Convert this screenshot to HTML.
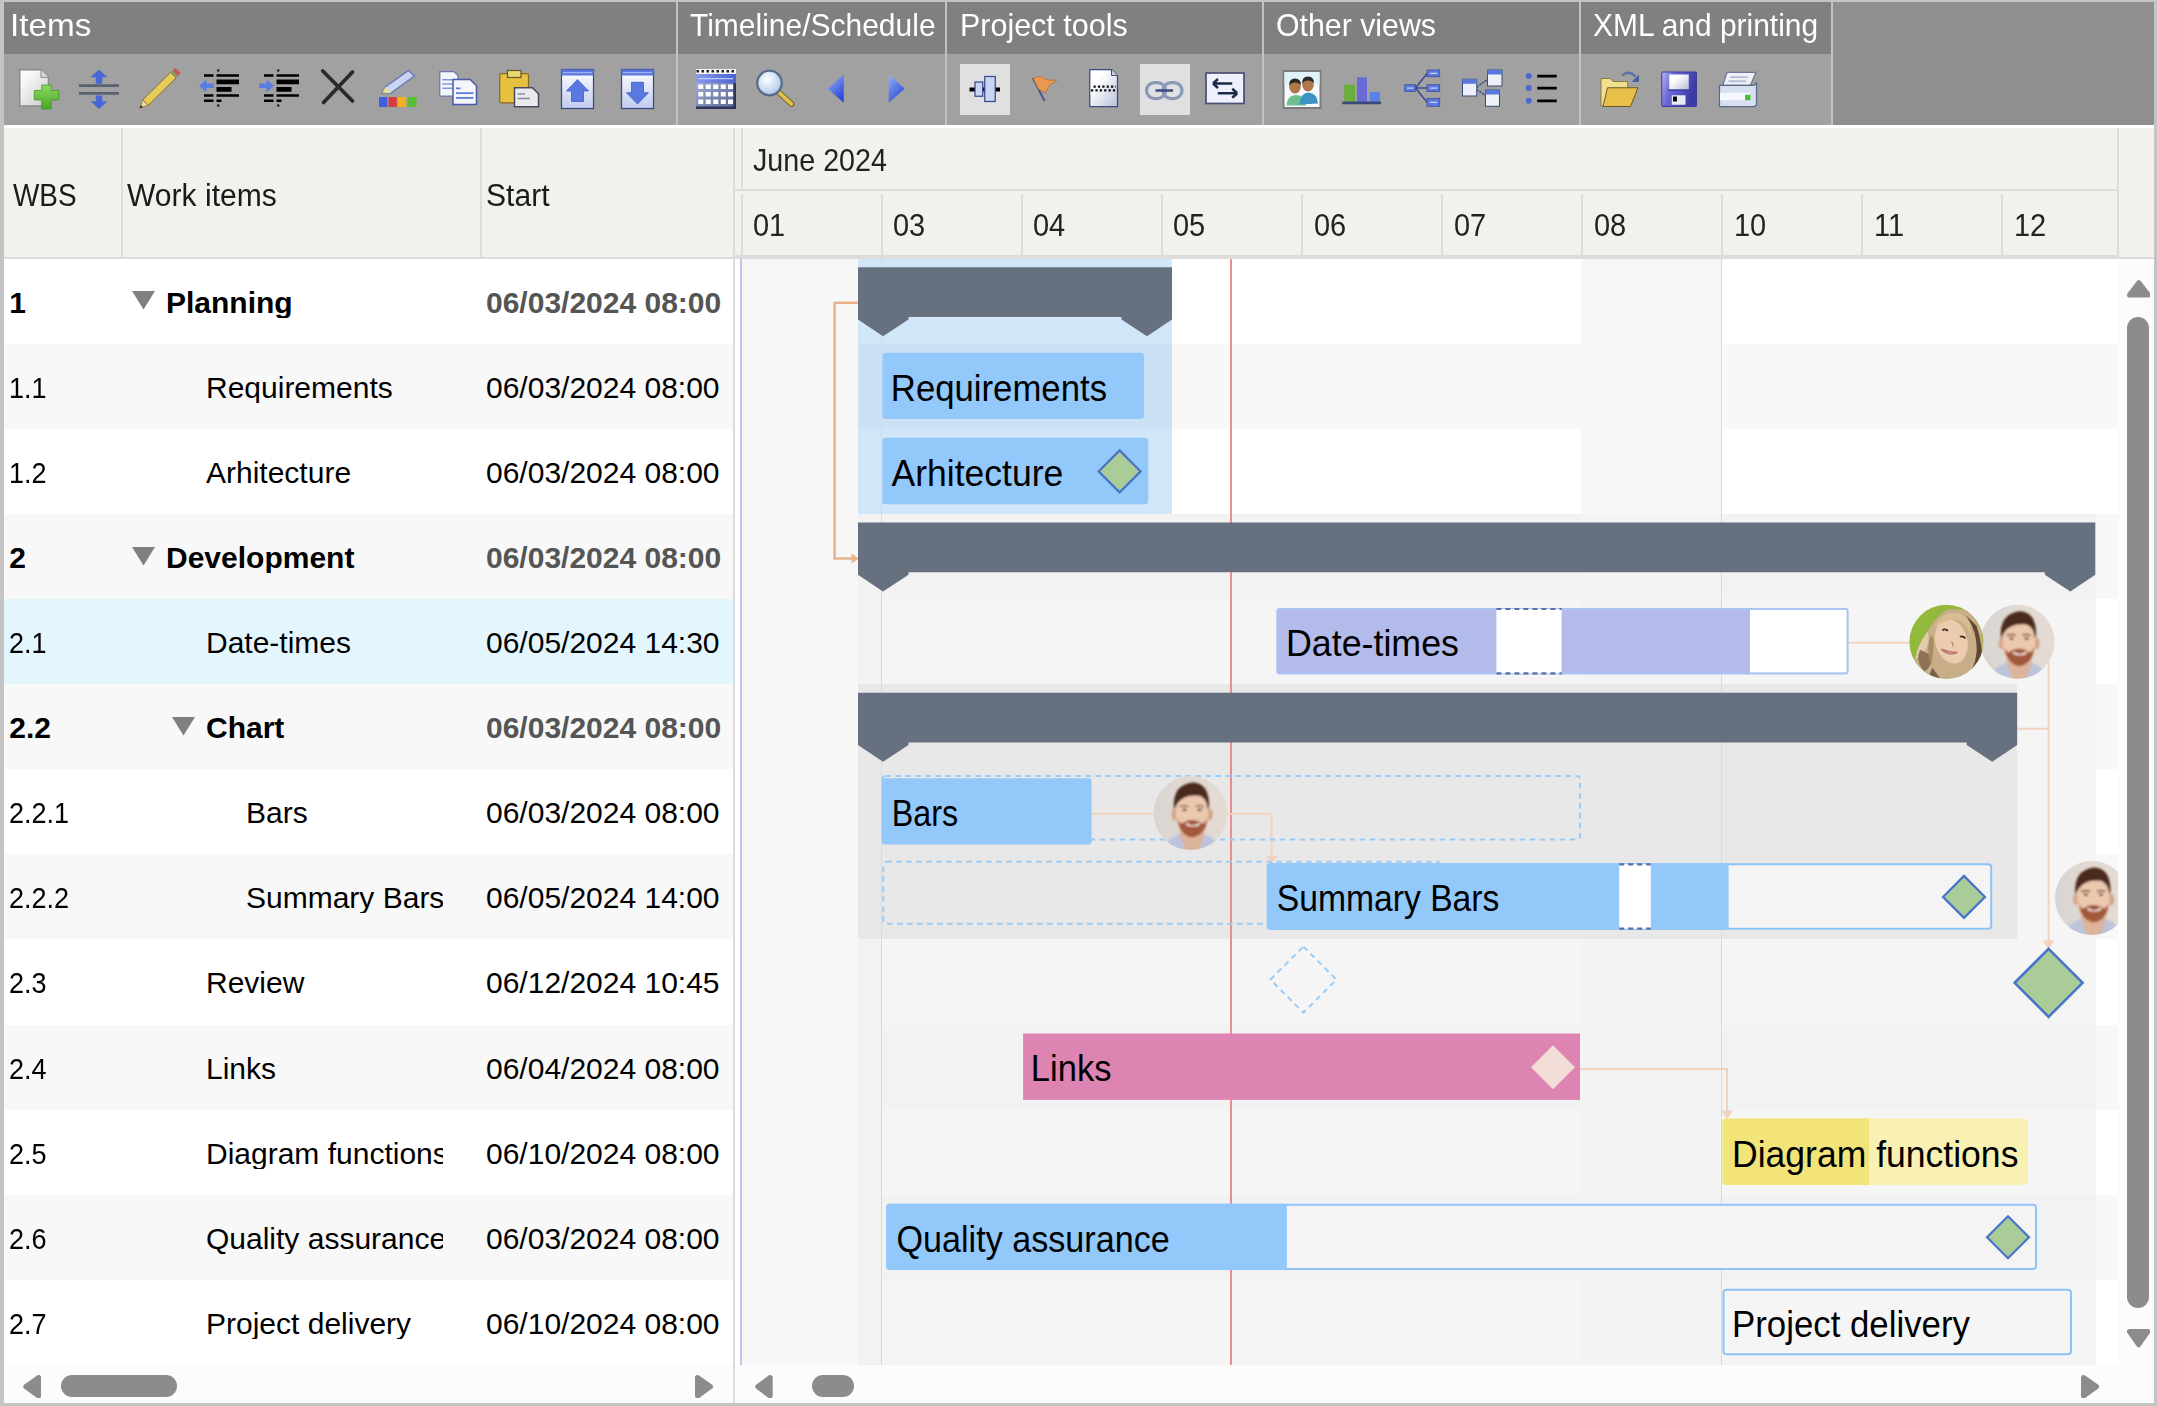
<!DOCTYPE html>
<html><head><meta charset="utf-8"><title>Gantt</title>
<style>
html,body{margin:0;padding:0;}
body{width:2157px;height:1406px;position:relative;overflow:hidden;font-family:"Liberation Sans", sans-serif;}
body>div,body>svg{position:absolute;}
.t{white-space:nowrap;}
</style></head><body>
<div style="left:0px;top:0px;width:2157px;height:1406px;background:#c4c4c4;"></div>
<div style="left:4px;top:2px;width:2150px;height:1401px;background:#ffffff;"></div>
<div style="left:4px;top:2px;width:672px;height:52px;background:#808080;"></div>
<div style="left:4px;top:54px;width:672px;height:70.5px;background:#a1a1a1;"></div>
<div style="left:678px;top:2px;width:267px;height:52px;background:#808080;"></div>
<div style="left:678px;top:54px;width:267px;height:70.5px;background:#a1a1a1;"></div>
<div style="left:947px;top:2px;width:315px;height:52px;background:#808080;"></div>
<div style="left:947px;top:54px;width:315px;height:70.5px;background:#a1a1a1;"></div>
<div style="left:1264px;top:2px;width:315px;height:52px;background:#808080;"></div>
<div style="left:1264px;top:54px;width:315px;height:70.5px;background:#a1a1a1;"></div>
<div style="left:1581px;top:2px;width:250px;height:52px;background:#808080;"></div>
<div style="left:1581px;top:54px;width:250px;height:70.5px;background:#a1a1a1;"></div>
<div style="left:676px;top:2px;width:2px;height:122.5px;background:#c2c2c2;"></div>
<div style="left:945px;top:2px;width:2px;height:122.5px;background:#c2c2c2;"></div>
<div style="left:1262px;top:2px;width:2px;height:122.5px;background:#c2c2c2;"></div>
<div style="left:1579px;top:2px;width:2px;height:122.5px;background:#c2c2c2;"></div>
<div style="left:1831px;top:2px;width:2px;height:122.5px;background:#c2c2c2;"></div>
<div style="left:1833px;top:2px;width:321px;height:122.5px;background:#8f8f8f;"></div>
<div class="t" style="left:10.0px;top:8.61px;font-size:32px;line-height:32px;color:#ffffff;font-weight:normal;transform:scaleX(1.04);transform-origin:0 0;">Items</div>
<div class="t" style="left:689.5px;top:8.61px;font-size:32px;line-height:32px;color:#ffffff;font-weight:normal;transform:scaleX(0.937);transform-origin:0 0;">Timeline/Schedule</div>
<div class="t" style="left:959.5px;top:8.61px;font-size:32px;line-height:32px;color:#ffffff;font-weight:normal;transform:scaleX(0.952);transform-origin:0 0;">Project tools</div>
<div class="t" style="left:1275.5px;top:8.61px;font-size:32px;line-height:32px;color:#ffffff;font-weight:normal;transform:scaleX(0.947);transform-origin:0 0;">Other views</div>
<div class="t" style="left:1592.5px;top:8.61px;font-size:32px;line-height:32px;color:#ffffff;font-weight:normal;transform:scaleX(0.935);transform-origin:0 0;">XML and printing</div>
<div style="left:4px;top:124.5px;width:2150px;height:3.0px;background:#ffffff;"></div>
<div style="left:960px;top:64px;width:50px;height:50.7px;background:#e0e0e0;"></div>
<div style="left:1140px;top:64px;width:50px;height:50.7px;background:#e0e0e0;"></div>
<svg style="left:0;top:0" width="0" height="0"><defs><filter id="icb" x="-20%" y="-20%" width="140%" height="140%"><feGaussianBlur stdDeviation="0.22"/></filter></defs></svg>
<svg style="left:19px;top:68.5px;overflow:visible" width="40" height="40" viewBox="0 0 16 16"><g filter="url(#icb)">
<defs><linearGradient id="ng" x1="0" y1="0" x2="1" y2="1"><stop offset="0.2" stop-color="#fafafa"/><stop offset="1" stop-color="#c8c8c8"/></linearGradient>
<linearGradient id="pg" x1="0" y1="0" x2="0" y2="1"><stop offset="0" stop-color="#8ad860"/><stop offset="1" stop-color="#48a828"/></linearGradient></defs>
<path d="M0.3,0.3 H8.8 L11.8,3.3 V14.8 H0.3 Z" fill="url(#ng)" stroke="#8a8a8a" stroke-width="0.6"/>
<path d="M8.8,0.3 V3.3 H11.8" fill="#dcdcdc" stroke="#9a9a9a" stroke-width="0.5"/>
<path d="M9.1,6.4 H12.9 V8.6 H15.9 V12.4 H12.9 V16 H9.1 V12.4 H6.1 V8.6 H9.1 Z" fill="url(#pg)" stroke="#3f9a1a" stroke-width="0.3"/>
</g></svg>
<svg style="left:79px;top:68.5px;overflow:visible" width="40" height="40" viewBox="0 0 16 16"><g filter="url(#icb)">
<rect x="0" y="6.1" width="16" height="1.1" fill="#5a6272"/>
<rect x="0" y="9.2" width="16" height="1.1" fill="#5a6272"/>
<path d="M8,0.2 L11.4,3.3 H9.3 V5.9 H6.7 V3.3 H4.6 Z" fill="#4a68d8"/>
<path d="M8,16 L11.4,12.9 H9.3 V10.6 H6.7 V12.9 H4.6 Z" fill="#4a68d8"/>
</g></svg>
<svg style="left:139px;top:68.5px;overflow:visible" width="40" height="40" viewBox="0 0 16 16"><g filter="url(#icb)">
<polygon points="1.49,12.35 12.66,1.32 14.84,3.53 3.67,14.56" fill="#e6cc58" stroke="#8a7030" stroke-width="0.4"/>
<polygon points="0.30,15.70 1.49,12.35 3.67,14.56" fill="#e8d4a8" stroke="#8a7030" stroke-width="0.3"/>
<polygon points="0.30,15.70 1.51,15.21 0.80,14.50" fill="#111"/>
<polygon points="12.66,1.32 13.37,0.62 15.55,2.83 14.84,3.53" fill="#7aa070"/>
<polygon points="13.37,0.62 14.51,-0.50 16.69,1.70 15.55,2.83" fill="#c85858"/>
</g></svg>
<svg style="left:199px;top:68.5px;overflow:visible" width="40" height="40" viewBox="0 0 16 16"><g filter="url(#icb)">
<rect x="7.3" y="0.2" width="0.8" height="0.8" fill="#000"/>
<rect x="2" y="2.1" width="3.8" height="1" fill="#000"/><rect x="7" y="2.1" width="9" height="1" fill="#000"/>
<rect x="7" y="4.2" width="9" height="1.9" fill="#000"/>
<rect x="7" y="7.2" width="6" height="1.9" fill="#000"/>
<rect x="2" y="10.1" width="3.8" height="1" fill="#000"/><rect x="7" y="10.1" width="9" height="1" fill="#000"/>
<rect x="2" y="12.2" width="3.8" height="1" fill="#000"/><rect x="7" y="12.2" width="2" height="1" fill="#000"/>
<rect x="7.3" y="14.2" width="0.8" height="0.8" fill="#000"/>
<path d="M0,6.7 L3,4.1 V5.8 H5.9 V7.6 H3 V9.3 Z" fill="#5a7ee0"/></g></svg>
<svg style="left:259px;top:68.5px;overflow:visible" width="40" height="40" viewBox="0 0 16 16"><g filter="url(#icb)">
<rect x="7.3" y="0.2" width="0.8" height="0.8" fill="#000"/>
<rect x="2" y="2.1" width="3.8" height="1" fill="#000"/><rect x="7" y="2.1" width="9" height="1" fill="#000"/>
<rect x="7" y="4.2" width="9" height="1.9" fill="#000"/>
<rect x="7" y="7.2" width="6" height="1.9" fill="#000"/>
<rect x="2" y="10.1" width="3.8" height="1" fill="#000"/><rect x="7" y="10.1" width="9" height="1" fill="#000"/>
<rect x="2" y="12.2" width="3.8" height="1" fill="#000"/><rect x="7" y="12.2" width="2" height="1" fill="#000"/>
<rect x="7.3" y="14.2" width="0.8" height="0.8" fill="#000"/>
<path d="M6,6.7 L3,4.1 V5.8 H0.1 V7.6 H3 V9.3 Z" fill="#5a7ee0"/></g></svg>
<svg style="left:319px;top:68.5px;overflow:visible" width="40" height="40" viewBox="0 0 16 16"><g filter="url(#icb)">
<path d="M1.5,0.8 L13.4,12.8 M13.4,1.2 L1.8,13.4" stroke="#2a2a2e" stroke-width="1.5" stroke-linecap="round"/>
</g></svg>
<svg style="left:379px;top:68.5px;overflow:visible" width="40" height="40" viewBox="0 0 16 16"><g filter="url(#icb)">
<path d="M1.4,9.5 L2.6,7.1 L11.8,0.6 L14.2,2.8 L4.8,9.6 Z" fill="#c8d4f0" stroke="#6a7ab0" stroke-width="0.6"/>
<path d="M1.4,9.5 L2.6,7.1 L4.8,9.6 Z" fill="#e8e090"/>
<rect x="0" y="11.2" width="3.3" height="4" fill="#3a5ee0"/>
<rect x="3.8" y="11.2" width="3.3" height="4" fill="#d83a3a"/>
<rect x="7.6" y="11.2" width="3.3" height="4" fill="#f0b020"/>
<rect x="11.4" y="11.2" width="3.6" height="4" fill="#58c030"/>
</g></svg>
<svg style="left:439px;top:68.5px;overflow:visible" width="40" height="40" viewBox="0 0 16 16"><g filter="url(#icb)">
<path d="M0.3,1 H6 L7.6,2.6 V10.8 H0.3 Z" fill="#f4f6fb" stroke="#6a7aa8" stroke-width="0.5"/>
<rect x="1.3" y="4" width="4.5" height="0.6" fill="#7a9ae0"/><rect x="1.3" y="5.7" width="4.5" height="0.6" fill="#7a9ae0"/><rect x="1.3" y="7.4" width="4.5" height="0.6" fill="#7a9ae0"/>
<path d="M5.6,4.2 H12.5 L15,6.7 V14.2 H5.6 Z" fill="#f4f6fb" stroke="#4a5aa8" stroke-width="0.6"/>
<rect x="6.8" y="7.4" width="1.8" height="0.7" fill="#5a7ae0"/><rect x="6.8" y="9.3" width="7" height="0.7" fill="#5a7ae0"/><rect x="6.8" y="11.2" width="7" height="0.7" fill="#5a7ae0"/>
</g></svg>
<svg style="left:499px;top:68.5px;overflow:visible" width="40" height="40" viewBox="0 0 16 16"><g filter="url(#icb)">
<rect x="0.3" y="1.8" width="11.5" height="11.7" rx="0.6" fill="#e8c040" stroke="#8a6a20" stroke-width="0.5"/>
<rect x="3.4" y="0.6" width="5.4" height="2.8" fill="#e8d870" stroke="#6a5a30" stroke-width="0.5"/>
<path d="M6.2,7.5 H13.4 L15.8,9.9 V15.1 H6.2 Z" fill="#e8eaf0" stroke="#4a4a5a" stroke-width="0.6"/>
<rect x="7.4" y="9.7" width="3" height="0.6" fill="#8a8a9a"/><rect x="7.4" y="11.5" width="5" height="0.6" fill="#8a8a9a"/>
</g></svg>
<svg style="left:559px;top:68.5px;overflow:visible" width="40" height="40" viewBox="0 0 16 16"><g filter="url(#icb)">
<defs><linearGradient id="wgu" x1="0" y1="0" x2="0" y2="1"><stop offset="0" stop-color="#ffffff"/><stop offset="1" stop-color="#c0ccf0"/></linearGradient></defs>
<rect x="1" y="0.2" width="12.8" height="15.6" fill="url(#wgu)" stroke="#3a4a80" stroke-width="0.5"/>
<rect x="1" y="0.2" width="12.8" height="2.4" fill="#5a78e0"/>
<rect x="1.6" y="1.2" width="11.6" height="0.5" fill="#9ab0f0"/>
<path d="M7.4,4.2 L11.8,8.8 H9.8 V13 H5 V8.8 H3 Z" fill="#5a78e0" stroke="#3a58c0" stroke-width="0.3"/></g></svg>
<svg style="left:619px;top:68.5px;overflow:visible" width="40" height="40" viewBox="0 0 16 16"><g filter="url(#icb)">
<defs><linearGradient id="wgd" x1="0" y1="0" x2="0" y2="1"><stop offset="0" stop-color="#ffffff"/><stop offset="1" stop-color="#c0ccf0"/></linearGradient></defs>
<rect x="1" y="0.2" width="12.8" height="15.6" fill="url(#wgd)" stroke="#3a4a80" stroke-width="0.5"/>
<rect x="1" y="0.2" width="12.8" height="2.4" fill="#5a78e0"/>
<rect x="1.6" y="1.2" width="11.6" height="0.5" fill="#9ab0f0"/>
<path d="M7.4,14 L11.8,9.5 H9.8 V5.3 H5 V9.5 H3 Z" fill="#5a78e0" stroke="#3a58c0" stroke-width="0.3"/></g></svg>
<svg style="left:696px;top:68.5px;overflow:visible" width="40" height="40" viewBox="0 0 16 16"><g filter="url(#icb)">
<defs><linearGradient id="calg" x1="0" y1="0" x2="1" y2="1"><stop offset="0" stop-color="#a8b4dc"/><stop offset="1" stop-color="#56648e"/></linearGradient>
<linearGradient id="calh" x1="0" y1="0" x2="1" y2="0"><stop offset="0" stop-color="#8a9ce8"/><stop offset="1" stop-color="#4a62d0"/></linearGradient></defs>
<rect x="0" y="0" width="16" height="2" fill="#f4f4f4"/>
<path d="M0.2,0.9 H16" stroke="#202020" stroke-width="1" stroke-dasharray="1,1"/>
<rect x="0" y="2" width="16" height="14" fill="url(#calg)"/>
<rect x="0" y="2" width="16" height="3.6" fill="url(#calh)"/>
<rect x="0.8" y="3.6" width="14" height="0.5" fill="#b8c8f8"/>
<rect x="0" y="15" width="16" height="1" fill="#2a3458"/>
<rect x="15" y="5.6" width="1" height="10.4" fill="#2a3458"/>
<rect x="0.9" y="6.2" width="2" height="1.8" fill="#ffffff"/><rect x="3.9" y="6.2" width="2" height="1.8" fill="#ffffff"/><rect x="6.9" y="6.2" width="2" height="1.8" fill="#ffffff"/><rect x="9.9" y="6.2" width="2" height="1.8" fill="#ffffff"/><rect x="12.8" y="6.2" width="2" height="1.8" fill="#ffffff"/><rect x="0.9" y="9.2" width="2" height="1.8" fill="#ffffff"/><rect x="3.9" y="9.2" width="2" height="1.8" fill="#ffffff"/><rect x="6.9" y="9.2" width="2" height="1.8" fill="#ffffff"/><rect x="9.9" y="9.2" width="2" height="1.8" fill="#ffffff"/><rect x="12.8" y="9.2" width="2" height="1.8" fill="#ffffff"/><rect x="0.9" y="12.2" width="2" height="1.8" fill="#ffffff"/><rect x="3.9" y="12.2" width="2" height="1.8" fill="#ffffff"/><rect x="6.9" y="12.2" width="2" height="1.8" fill="#ffffff"/><rect x="9.9" y="12.2" width="2" height="1.8" fill="#ffffff"/><rect x="12.8" y="12.2" width="2" height="1.8" fill="#ffffff"/></g></svg>
<svg style="left:756px;top:68.5px;overflow:visible" width="40" height="40" viewBox="0 0 16 16"><g filter="url(#icb)">
<defs><radialGradient id="zg" cx="0.4" cy="0.35" r="0.7"><stop offset="0" stop-color="#ffffff"/><stop offset="1" stop-color="#a8c4e4"/></radialGradient></defs>
<path d="M9.4,9.6 L14.2,14" stroke="#6a5a20" stroke-width="2.3" stroke-linecap="round"/>
<path d="M9.4,9.6 L14.2,14" stroke="#e0c050" stroke-width="1.5" stroke-linecap="round"/>
<circle cx="5.4" cy="5.6" r="4.9" fill="url(#zg)" stroke="#5a6a8c" stroke-width="0.9"/>
</g></svg>
<svg style="left:816px;top:68.5px;overflow:visible" width="40" height="40" viewBox="0 0 16 16"><g filter="url(#icb)">
<defs><linearGradient id="alg" x1="0" y1="0" x2="0.6" y2="1"><stop offset="0" stop-color="#9ab4f8"/><stop offset="1" stop-color="#2a4ad8"/></linearGradient></defs>
<path d="M4.7,7.9 L11.1,2.1 V13.5 Z" fill="url(#alg)"/></g></svg>
<svg style="left:876px;top:68.5px;overflow:visible" width="40" height="40" viewBox="0 0 16 16"><g filter="url(#icb)">
<defs><linearGradient id="arg" x1="0" y1="0" x2="0.6" y2="1"><stop offset="0" stop-color="#9ab4f8"/><stop offset="1" stop-color="#2a4ad8"/></linearGradient></defs>
<path d="M11.5,7.9 L5.1,2.1 V13.5 Z" fill="url(#arg)"/></g></svg>
<svg style="left:965px;top:68.5px;overflow:visible" width="40" height="40" viewBox="0 0 16 16"><g filter="url(#icb)">
<rect x="1.8" y="7.4" width="12.2" height="1.6" fill="#000"/>
<rect x="4" y="5.2" width="3.1" height="5.7" fill="#c8d4f4" stroke="#3a4a90" stroke-width="0.5"/>
<rect x="7.9" y="3" width="4.2" height="10" fill="#c8d4f4" stroke="#3a4a90" stroke-width="0.5"/>
</g></svg>
<svg style="left:1025px;top:68.5px;overflow:visible" width="40" height="40" viewBox="0 0 16 16"><g filter="url(#icb)">
<path d="M3.1,3.6 L7.8,12.8" stroke="#4a5a90" stroke-width="0.8"/>
<path d="M3.3,3.8 Q6,2.2 8,4 Q10.5,4.8 12.8,4.4 L9.4,7 L8.2,9.6 Q6.5,8.5 5.4,8 Z" fill="#e89850" stroke="#b86a30" stroke-width="0.3"/>
</g></svg>
<svg style="left:1085px;top:68.5px;overflow:visible" width="40" height="40" viewBox="0 0 16 16"><g filter="url(#icb)">
<defs><linearGradient id="dg" x1="0" y1="0" x2="1" y2="1"><stop offset="0.3" stop-color="#ffffff"/><stop offset="1" stop-color="#b8c0d8"/></linearGradient></defs>
<path d="M1.9,0.2 H10.6 L13,2.6 V15 H1.9 Z" fill="url(#dg)" stroke="#3a4a80" stroke-width="0.5"/>
<path d="M10.6,0.2 V2.6 H13" fill="#c8d0e8" stroke="#3a4a80" stroke-width="0.4"/>
<path d="M3.4,7 H12.4" stroke="#111" stroke-width="0.9" stroke-dasharray="0.9,0.85"/>
<path d="M2.4,8.5 H13" stroke="#111" stroke-width="0.9" stroke-dasharray="0.9,0.85"/>
</g></svg>
<svg style="left:1145px;top:68.5px;overflow:visible" width="40" height="40" viewBox="0 0 16 16"><g filter="url(#icb)">
<rect x="0.6" y="5.4" width="7.6" height="6.4" rx="3.2" fill="none" stroke="#8a98b8" stroke-width="1.3"/>
<rect x="7.2" y="5.4" width="7.6" height="6.4" rx="3.2" fill="none" stroke="#8a98b8" stroke-width="1.3"/>
<rect x="4.2" y="8.1" width="7" height="1" fill="#3a4a80"/>
</g></svg>
<svg style="left:1205px;top:68.5px;overflow:visible" width="40" height="40" viewBox="0 0 16 16"><g filter="url(#icb)">
<rect x="0.4" y="1.6" width="15.2" height="12.2" fill="#eef0fb" stroke="#4a5278" stroke-width="0.7"/>
<path d="M3.2,5.8 H10.9 M3.2,5.8 L5.2,4 M3.2,5.8 L5.2,7.6" stroke="#1f2a48" stroke-width="1" fill="none"/>
<path d="M5.1,9.7 H12.9 M12.9,9.7 L10.9,7.9 M12.9,9.7 L10.9,11.5" stroke="#1f2a48" stroke-width="1" fill="none"/>
</g></svg>
<svg style="left:1281px;top:68.5px;overflow:visible" width="40" height="40" viewBox="0 0 16 16"><g filter="url(#icb)">
<rect x="0.6" y="0.4" width="15.6" height="15.6" fill="#7c7c7c"/>
<rect x="1.4" y="1.2" width="14" height="14" fill="#f4fafc"/>
<rect x="1.4" y="1.2" width="14" height="5" fill="#dff2f8"/>
<path d="M2.2,14.6 Q2.4,10.6 6,10.4 Q9.6,10.6 10,14.6 Z" fill="#6cc08a"/>
<path d="M7.4,14.2 Q7.6,9.6 11,9.4 Q14.4,9.6 14.8,13.8 Z" fill="#3c94c4"/>
<ellipse cx="5.6" cy="7.2" rx="2.3" ry="2.6" fill="#b07848"/>
<ellipse cx="10.8" cy="6.4" rx="2.3" ry="2.6" fill="#b07848"/>
<path d="M3.2,6.6 Q3.2,3.8 5.6,3.8 Q8,3.8 8,6.4 Q6.8,5.2 5.6,5.4 Q4.2,5.4 3.2,6.6 Z" fill="#2a2a26"/>
<path d="M8.4,5.8 Q8.4,3 10.8,3 Q13.2,3 13.2,5.6 Q12,4.4 10.8,4.6 Q9.4,4.6 8.4,5.8 Z" fill="#2a2a26"/>
</g></svg>
<svg style="left:1341px;top:68.5px;overflow:visible" width="40" height="40" viewBox="0 0 16 16"><g filter="url(#icb)">
<rect x="1.3" y="6.3" width="4.3" height="6.9" fill="#6aae3a"/>
<rect x="6.4" y="3.3" width="4" height="9.9" fill="#6a6ad8"/>
<rect x="11.5" y="9.2" width="4.1" height="4" fill="#5a82e8"/>
<rect x="0.5" y="13" width="15.5" height="1.1" fill="#3a4a78"/>
</g></svg>
<svg style="left:1401px;top:68.5px;overflow:visible" width="40" height="40" viewBox="0 0 16 16"><g filter="url(#icb)">
<path d="M5.8,7.6 L10.4,1.8 M5.8,7.6 H10.4 M5.8,7.6 L10.4,13.3" stroke="#3a4a90" stroke-width="0.6"/>
<rect x="1.5" y="6.3" width="4.3" height="2.7" fill="#5a78e0" stroke="#3a4a90" stroke-width="0.3"/>
<rect x="10.4" y="0.4" width="5.1" height="2.7" fill="#5a78e0" stroke="#3a4a90" stroke-width="0.3"/>
<rect x="10.4" y="6.3" width="5.1" height="2.7" fill="#5a78e0" stroke="#3a4a90" stroke-width="0.3"/>
<rect x="10.4" y="11.8" width="5.1" height="3.1" fill="#5a78e0" stroke="#3a4a90" stroke-width="0.3"/>
<rect x="2.4" y="7.4" width="2.5" height="0.5" fill="#c8d4f8"/>
<rect x="11.5" y="1.5" width="3" height="0.5" fill="#c8d4f8"/><rect x="11.5" y="7.4" width="3" height="0.5" fill="#c8d4f8"/><rect x="11.5" y="13.1" width="3" height="0.5" fill="#c8d4f8"/>
</g></svg>
<svg style="left:1461px;top:68.5px;overflow:visible" width="40" height="40" viewBox="0 0 16 16"><g filter="url(#icb)">
<path d="M6.3,7.2 L10.6,4.2 M6.3,8.2 L9.8,10.6" stroke="#3a4a90" stroke-width="0.7" stroke-dasharray="0.8,0.5"/>
<rect x="0.6" y="4.1" width="5.7" height="6.7" fill="#eef0f8" stroke="#3a4a78" stroke-width="0.4"/><rect x="0.6" y="4.1" width="5.7" height="1.8" fill="#5a78e0"/>
<rect x="10.6" y="0.4" width="5.8" height="6.4" fill="#eef0f8" stroke="#3a4a78" stroke-width="0.4"/><rect x="10.6" y="0.4" width="5.8" height="1.8" fill="#5a78e0"/>
<rect x="9.8" y="8.4" width="5.6" height="6.5" fill="#eef0f8" stroke="#3a4a78" stroke-width="0.4"/><rect x="9.8" y="8.4" width="5.6" height="1.8" fill="#5a78e0"/>
</g></svg>
<svg style="left:1521px;top:68.5px;overflow:visible" width="40" height="40" viewBox="0 0 16 16"><g filter="url(#icb)">
<circle cx="3.1" cy="2.8" r="1.2" fill="#4a68d0"/><circle cx="3.1" cy="7.6" r="1.2" fill="#4a68d0"/><circle cx="3.1" cy="12.7" r="1.2" fill="#4a68d0"/>
<rect x="6.5" y="2.3" width="7.8" height="1.1" fill="#000"/><rect x="6.5" y="7.1" width="7.8" height="1.1" fill="#000"/><rect x="6.5" y="12.2" width="7.8" height="1.1" fill="#000"/>
</g></svg>
<svg style="left:1599px;top:68.5px;overflow:visible" width="40" height="40" viewBox="0 0 16 16"><g filter="url(#icb)">
<path d="M9.2,2.6 Q12,0.2 14.6,3" stroke="#5a70a8" stroke-width="0.9" fill="none"/>
<path d="M13,5.2 L16,2.2 L16,5.2 Z" fill="#4a60a0"/>
<path d="M0.8,3.8 H4.6 L5.6,5 H11.5 V14.8 H0.8 Z" fill="#f0e090" stroke="#8a7a40" stroke-width="0.4"/>
<path d="M3.4,7.5 H15.6 L12.6,15 H1.6 Z" fill="#e8c048" stroke="#6a5a20" stroke-width="0.4"/>
</g></svg>
<svg style="left:1659px;top:68.5px;overflow:visible" width="40" height="40" viewBox="0 0 16 16"><g filter="url(#icb)">
<defs><linearGradient id="svg1" x1="0" y1="0" x2="1" y2="0.3"><stop offset="0" stop-color="#b4b4f8"/><stop offset="0.35" stop-color="#6a6ad8"/><stop offset="1" stop-color="#3a3aa8"/></linearGradient>
<linearGradient id="svg2" x1="0" y1="0" x2="1" y2="1"><stop offset="0.3" stop-color="#ffffff"/><stop offset="1" stop-color="#b8bcd8"/></linearGradient></defs>
<rect x="1.1" y="1.2" width="13.9" height="13.8" rx="0.4" fill="url(#svg1)" stroke="#3a3a98" stroke-width="0.4"/>
<rect x="4.1" y="2.2" width="7.8" height="6" fill="url(#svg2)"/>
<rect x="3.6" y="8.2" width="8.8" height="0.5" fill="#3a3aa0"/>
<rect x="5.1" y="10.5" width="5.5" height="3.8" fill="#e8eaf4"/>
<rect x="5.6" y="11" width="1.6" height="2" fill="#111"/>
</g></svg>
<svg style="left:1719px;top:68.5px;overflow:visible" width="40" height="40" viewBox="0 0 16 16"><g filter="url(#icb)">
<path d="M3.2,1.3 H14.8 L12.6,6.5 H1.5 Z" fill="#eef0f6" stroke="#6a7898" stroke-width="0.5"/>
<rect x="4.5" y="3" width="7" height="0.5" fill="#9aa8c8"/><rect x="3.8" y="4.6" width="7" height="0.5" fill="#9aa8c8"/>
<path d="M0.2,6.5 H14 L15,5.6 V14.4 L14,15 H0.2 Z" fill="#d8dff0" stroke="#5a6888" stroke-width="0.5"/>
<rect x="0.4" y="9.5" width="12" height="3" fill="#f4f8fe"/>
<rect x="10.4" y="10.3" width="2.2" height="2.2" fill="#48c030"/>
</g></svg>
<div style="left:4px;top:127.5px;width:2150px;height:129.0px;background:#f2f1ed;"></div>
<div style="left:4px;top:256.5px;width:2150px;height:2.3000000000000114px;background:#dcdcdc;"></div>
<div style="left:121px;top:127.5px;width:2px;height:129.0px;background:#dcdcdc;"></div>
<div style="left:480px;top:127.5px;width:2px;height:129.0px;background:#dcdcdc;"></div>
<div class="t" style="left:12.5px;top:179.96px;font-size:31px;line-height:31px;color:#1a1a1a;font-weight:normal;transform:scaleX(0.9);transform-origin:0 0;">WBS</div>
<div class="t" style="left:127px;top:179.96px;font-size:31px;line-height:31px;color:#1a1a1a;font-weight:normal;transform:scaleX(0.97);transform-origin:0 0;">Work items</div>
<div class="t" style="left:486px;top:179.96px;font-size:31px;line-height:31px;color:#1a1a1a;font-weight:normal;transform:scaleX(0.97);transform-origin:0 0;">Start</div>
<div style="left:4px;top:258.6px;width:729px;height:85.10000000000002px;background:#ffffff;"></div>
<div style="left:735px;top:258.6px;width:1383px;height:85.10000000000002px;background:#ffffff;"></div>
<div class="t" style="left:9.3px;top:287.61px;font-size:30px;line-height:30px;color:#000;font-weight:bold;">1</div>
<svg style="left:132px;top:291.30px" width="23" height="19" viewBox="0 0 23 19"><polygon points="0,0 23,0 11.5,18.5" fill="#808080"/></svg>
<div class="t" style="left:166px;top:287.61px;width:277px;overflow:hidden;white-space:nowrap;font-size:30px;line-height:30px;color:#000;font-weight:bold">Planning</div>
<div class="t" style="left:486px;top:287.61px;font-size:30px;line-height:30px;color:#555;font-weight:bold;">06/03/2024 08:00</div>
<div style="left:4px;top:343.70000000000005px;width:729px;height:85.10000000000002px;background:#f8f8f8;"></div>
<div style="left:735px;top:343.70000000000005px;width:1383px;height:85.10000000000002px;background:#f8f8f8;"></div>
<div class="t" style="left:8.6px;top:372.71px;font-size:30px;line-height:30px;color:#000;font-weight:normal;transform:scaleX(0.9);transform-origin:0 0;">1.1</div>
<div class="t" style="left:206px;top:372.71px;width:237px;overflow:hidden;white-space:nowrap;font-size:30px;line-height:30px;color:#000;font-weight:normal">Requirements</div>
<div class="t" style="left:486px;top:372.71px;font-size:30px;line-height:30px;color:#000;font-weight:normal;">06/03/2024 08:00</div>
<div style="left:4px;top:428.8px;width:729px;height:85.09999999999997px;background:#ffffff;"></div>
<div style="left:735px;top:428.8px;width:1383px;height:85.09999999999997px;background:#ffffff;"></div>
<div class="t" style="left:8.6px;top:457.81px;font-size:30px;line-height:30px;color:#000;font-weight:normal;transform:scaleX(0.9);transform-origin:0 0;">1.2</div>
<div class="t" style="left:206px;top:457.81px;width:237px;overflow:hidden;white-space:nowrap;font-size:30px;line-height:30px;color:#000;font-weight:normal">Arhitecture</div>
<div class="t" style="left:486px;top:457.81px;font-size:30px;line-height:30px;color:#000;font-weight:normal;">06/03/2024 08:00</div>
<div style="left:4px;top:513.9px;width:729px;height:85.10000000000002px;background:#f8f8f8;"></div>
<div style="left:735px;top:513.9px;width:1383px;height:85.10000000000002px;background:#f8f8f8;"></div>
<div class="t" style="left:9.3px;top:542.90px;font-size:30px;line-height:30px;color:#000;font-weight:bold;">2</div>
<svg style="left:132px;top:546.60px" width="23" height="19" viewBox="0 0 23 19"><polygon points="0,0 23,0 11.5,18.5" fill="#808080"/></svg>
<div class="t" style="left:166px;top:542.90px;width:277px;overflow:hidden;white-space:nowrap;font-size:30px;line-height:30px;color:#000;font-weight:bold">Development</div>
<div class="t" style="left:486px;top:542.90px;font-size:30px;line-height:30px;color:#555;font-weight:bold;">06/03/2024 08:00</div>
<div style="left:4px;top:599.0px;width:729px;height:85.10000000000002px;background:#e4f6fd;"></div>
<div style="left:735px;top:599.0px;width:1383px;height:85.10000000000002px;background:#ffffff;"></div>
<div class="t" style="left:8.6px;top:628.00px;font-size:30px;line-height:30px;color:#000;font-weight:normal;transform:scaleX(0.9);transform-origin:0 0;">2.1</div>
<div class="t" style="left:206px;top:628.00px;width:237px;overflow:hidden;white-space:nowrap;font-size:30px;line-height:30px;color:#000;font-weight:normal">Date-times</div>
<div class="t" style="left:486px;top:628.00px;font-size:30px;line-height:30px;color:#000;font-weight:normal;">06/05/2024 14:30</div>
<div style="left:4px;top:684.1px;width:729px;height:85.10000000000002px;background:#f8f8f8;"></div>
<div style="left:735px;top:684.1px;width:1383px;height:85.10000000000002px;background:#f8f8f8;"></div>
<div class="t" style="left:9.3px;top:713.11px;font-size:30px;line-height:30px;color:#000;font-weight:bold;">2.2</div>
<svg style="left:172px;top:716.80px" width="23" height="19" viewBox="0 0 23 19"><polygon points="0,0 23,0 11.5,18.5" fill="#808080"/></svg>
<div class="t" style="left:206px;top:713.11px;width:237px;overflow:hidden;white-space:nowrap;font-size:30px;line-height:30px;color:#000;font-weight:bold">Chart</div>
<div class="t" style="left:486px;top:713.11px;font-size:30px;line-height:30px;color:#555;font-weight:bold;">06/03/2024 08:00</div>
<div style="left:4px;top:769.2px;width:729px;height:85.10000000000002px;background:#ffffff;"></div>
<div style="left:735px;top:769.2px;width:1383px;height:85.10000000000002px;background:#ffffff;"></div>
<div class="t" style="left:8.6px;top:798.21px;font-size:30px;line-height:30px;color:#000;font-weight:normal;transform:scaleX(0.9);transform-origin:0 0;">2.2.1</div>
<div class="t" style="left:246px;top:798.21px;width:197px;overflow:hidden;white-space:nowrap;font-size:30px;line-height:30px;color:#000;font-weight:normal">Bars</div>
<div class="t" style="left:486px;top:798.21px;font-size:30px;line-height:30px;color:#000;font-weight:normal;">06/03/2024 08:00</div>
<div style="left:4px;top:854.3px;width:729px;height:85.10000000000002px;background:#f8f8f8;"></div>
<div style="left:735px;top:854.3px;width:1383px;height:85.10000000000002px;background:#f8f8f8;"></div>
<div class="t" style="left:8.6px;top:883.30px;font-size:30px;line-height:30px;color:#000;font-weight:normal;transform:scaleX(0.9);transform-origin:0 0;">2.2.2</div>
<div class="t" style="left:246px;top:883.30px;width:197px;overflow:hidden;white-space:nowrap;font-size:30px;line-height:30px;color:#000;font-weight:normal">Summary Bars</div>
<div class="t" style="left:486px;top:883.30px;font-size:30px;line-height:30px;color:#000;font-weight:normal;">06/05/2024 14:00</div>
<div style="left:4px;top:939.4px;width:729px;height:85.10000000000002px;background:#ffffff;"></div>
<div style="left:735px;top:939.4px;width:1383px;height:85.10000000000002px;background:#ffffff;"></div>
<div class="t" style="left:8.6px;top:968.40px;font-size:30px;line-height:30px;color:#000;font-weight:normal;transform:scaleX(0.9);transform-origin:0 0;">2.3</div>
<div class="t" style="left:206px;top:968.40px;width:237px;overflow:hidden;white-space:nowrap;font-size:30px;line-height:30px;color:#000;font-weight:normal">Review</div>
<div class="t" style="left:486px;top:968.40px;font-size:30px;line-height:30px;color:#000;font-weight:normal;">06/12/2024 10:45</div>
<div style="left:4px;top:1024.5px;width:729px;height:85.09999999999991px;background:#f8f8f8;"></div>
<div style="left:735px;top:1024.5px;width:1383px;height:85.09999999999991px;background:#f8f8f8;"></div>
<div class="t" style="left:8.6px;top:1053.51px;font-size:30px;line-height:30px;color:#000;font-weight:normal;transform:scaleX(0.9);transform-origin:0 0;">2.4</div>
<div class="t" style="left:206px;top:1053.51px;width:237px;overflow:hidden;white-space:nowrap;font-size:30px;line-height:30px;color:#000;font-weight:normal">Links</div>
<div class="t" style="left:486px;top:1053.51px;font-size:30px;line-height:30px;color:#000;font-weight:normal;">06/04/2024 08:00</div>
<div style="left:4px;top:1109.6px;width:729px;height:85.09999999999991px;background:#ffffff;"></div>
<div style="left:735px;top:1109.6px;width:1383px;height:85.09999999999991px;background:#ffffff;"></div>
<div class="t" style="left:8.6px;top:1138.61px;font-size:30px;line-height:30px;color:#000;font-weight:normal;transform:scaleX(0.9);transform-origin:0 0;">2.5</div>
<div class="t" style="left:206px;top:1138.61px;width:237px;overflow:hidden;white-space:nowrap;font-size:30px;line-height:30px;color:#000;font-weight:normal">Diagram functions</div>
<div class="t" style="left:486px;top:1138.61px;font-size:30px;line-height:30px;color:#000;font-weight:normal;">06/10/2024 08:00</div>
<div style="left:4px;top:1194.6999999999998px;width:729px;height:85.09999999999991px;background:#f8f8f8;"></div>
<div style="left:735px;top:1194.6999999999998px;width:1383px;height:85.09999999999991px;background:#f8f8f8;"></div>
<div class="t" style="left:8.6px;top:1223.70px;font-size:30px;line-height:30px;color:#000;font-weight:normal;transform:scaleX(0.9);transform-origin:0 0;">2.6</div>
<div class="t" style="left:206px;top:1223.70px;width:237px;overflow:hidden;white-space:nowrap;font-size:30px;line-height:30px;color:#000;font-weight:normal">Quality assurance</div>
<div class="t" style="left:486px;top:1223.70px;font-size:30px;line-height:30px;color:#000;font-weight:normal;">06/03/2024 08:00</div>
<div style="left:4px;top:1279.8px;width:729px;height:85.09999999999991px;background:#ffffff;"></div>
<div style="left:735px;top:1279.8px;width:1383px;height:85.09999999999991px;background:#ffffff;"></div>
<div class="t" style="left:8.6px;top:1308.81px;font-size:30px;line-height:30px;color:#000;font-weight:normal;transform:scaleX(0.9);transform-origin:0 0;">2.7</div>
<div class="t" style="left:206px;top:1308.81px;width:237px;overflow:hidden;white-space:nowrap;font-size:30px;line-height:30px;color:#000;font-weight:normal">Project delivery</div>
<div class="t" style="left:486px;top:1308.81px;font-size:30px;line-height:30px;color:#000;font-weight:normal;">06/10/2024 08:00</div>
<div style="left:733px;top:127.5px;width:2px;height:1275.5px;background:#dcdcdc;"></div>
<div style="left:4px;top:1364.9px;width:729px;height:38.09999999999991px;background:#fcfcfc;"></div>
<div style="left:735px;top:1364.9px;width:1419px;height:38.09999999999991px;background:#fcfcfc;"></div>
<div style="left:2118px;top:258.6px;width:36px;height:1106.3000000000002px;background:#fcfcfc;"></div>
<div style="left:735px;top:258.6px;width:5px;height:1106.3000000000002px;background:#ffffff;"></div>
<div style="left:741px;top:127.5px;width:2px;height:61.5px;background:#dcdcdc;"></div>
<div style="left:735px;top:189px;width:1383px;height:2px;background:#dcdcdc;"></div>
<div style="left:735px;top:254.5px;width:1383px;height:2.0px;background:#dcdcdc;"></div>
<div style="left:2117px;top:127.5px;width:2px;height:129.0px;background:#dcdcdc;"></div>
<div class="t" style="left:752.5px;top:145.18px;font-size:30.5px;line-height:30.5px;color:#222;font-weight:normal;transform:scaleX(0.94);transform-origin:0 0;">June 2024</div>
<div style="left:741.0px;top:194px;width:2.0px;height:60.5px;background:#dcdcdc;"></div>
<div class="t" style="left:753.3px;top:210.38px;font-size:30.5px;line-height:30.5px;color:#222;font-weight:normal;transform:scaleX(0.95);transform-origin:0 0;">01</div>
<div style="left:881.05px;top:194px;width:2.0px;height:60.5px;background:#dcdcdc;"></div>
<div class="t" style="left:893.3499999999999px;top:210.38px;font-size:30.5px;line-height:30.5px;color:#222;font-weight:normal;transform:scaleX(0.95);transform-origin:0 0;">03</div>
<div style="left:1021.1px;top:194px;width:2.0px;height:60.5px;background:#dcdcdc;"></div>
<div class="t" style="left:1033.4px;top:210.38px;font-size:30.5px;line-height:30.5px;color:#222;font-weight:normal;transform:scaleX(0.95);transform-origin:0 0;">04</div>
<div style="left:1161.15px;top:194px;width:2.0px;height:60.5px;background:#dcdcdc;"></div>
<div class="t" style="left:1173.45px;top:210.38px;font-size:30.5px;line-height:30.5px;color:#222;font-weight:normal;transform:scaleX(0.95);transform-origin:0 0;">05</div>
<div style="left:1301.2px;top:194px;width:2.0px;height:60.5px;background:#dcdcdc;"></div>
<div class="t" style="left:1313.5px;top:210.38px;font-size:30.5px;line-height:30.5px;color:#222;font-weight:normal;transform:scaleX(0.95);transform-origin:0 0;">06</div>
<div style="left:1441.25px;top:194px;width:2.0px;height:60.5px;background:#dcdcdc;"></div>
<div class="t" style="left:1453.55px;top:210.38px;font-size:30.5px;line-height:30.5px;color:#222;font-weight:normal;transform:scaleX(0.95);transform-origin:0 0;">07</div>
<div style="left:1581.3000000000002px;top:194px;width:2.0px;height:60.5px;background:#dcdcdc;"></div>
<div class="t" style="left:1593.6000000000001px;top:210.38px;font-size:30.5px;line-height:30.5px;color:#222;font-weight:normal;transform:scaleX(0.95);transform-origin:0 0;">08</div>
<div style="left:1721.3500000000001px;top:194px;width:2.0px;height:60.5px;background:#dcdcdc;"></div>
<div class="t" style="left:1733.65px;top:210.38px;font-size:30.5px;line-height:30.5px;color:#222;font-weight:normal;transform:scaleX(0.95);transform-origin:0 0;">10</div>
<div style="left:1861.4px;top:194px;width:2.0px;height:60.5px;background:#dcdcdc;"></div>
<div class="t" style="left:1873.7px;top:210.38px;font-size:30.5px;line-height:30.5px;color:#222;font-weight:normal;transform:scaleX(0.95);transform-origin:0 0;">11</div>
<div style="left:2001.45px;top:194px;width:2.0px;height:60.5px;background:#dcdcdc;"></div>
<div class="t" style="left:2013.75px;top:210.38px;font-size:30.5px;line-height:30.5px;color:#222;font-weight:normal;transform:scaleX(0.95);transform-origin:0 0;">12</div>
<div style="left:742px;top:258.6px;width:139px;height:1106.3000000000002px;background:#f7f7f7;"></div>
<div style="left:1581px;top:258.6px;width:140px;height:1106.3000000000002px;background:#f7f7f7;"></div>
<div style="left:858px;top:258.6px;width:314px;height:255.29999999999995px;background:#d1e6f9;"></div>
<div style="left:858px;top:343.70000000000005px;width:314px;height:85.09999999999997px;background:#cce1f6;"></div>
<div style="left:858px;top:513.9px;width:1238px;height:851.0000000000001px;background:#f5f5f5;"></div>
<div style="left:858px;top:513.9px;width:1238px;height:85.10000000000002px;background:#f2f2f2;"></div>
<div style="left:858px;top:1024.5px;width:1238px;height:85.09999999999991px;background:#f2f2f2;"></div>
<div style="left:858px;top:1194.6999999999998px;width:1238px;height:85.10000000000014px;background:#f2f2f2;"></div>
<div style="left:858px;top:513.9px;width:23px;height:851.0000000000001px;background:#f2f2f2;"></div>
<div style="left:1581px;top:513.9px;width:140px;height:851.0000000000001px;background:#f3f3f3;"></div>
<div style="left:858px;top:684.1px;width:1159px;height:255.29999999999995px;background:#e8e8e8;"></div>
<div style="left:880.5px;top:258.6px;width:1.2000000000000455px;height:1106.3000000000002px;background:#d8d4f2;"></div>
<div style="left:1720.5px;top:258.6px;width:1.2000000000000455px;height:1106.3000000000002px;background:#d8d4f2;"></div>
<div style="left:740px;top:258.6px;width:2.2999999999999545px;height:1106.3000000000002px;background:#c6bfea;"></div>
<div style="left:1230.4px;top:258.6px;width:1.199999999999818px;height:1106.3000000000002px;background:#ec8e8e;"></div>
<svg style="left:735px;top:258.6px;overflow:hidden" width="1383" height="1106.3" viewBox="735 258.6 1383 1106.3" font-family='"Liberation Sans", sans-serif'><defs>
<clipPath id="avc"><circle cx="0" cy="0" r="37"/></clipPath>
<filter id="soft" x="-20%" y="-20%" width="140%" height="140%"><feGaussianBlur stdDeviation="0.8"/></filter><filter id="soft2" x="-20%" y="-20%" width="140%" height="140%"><feGaussianBlur stdDeviation="0.55"/></filter>
<linearGradient id="manbg" x1="0" y1="0" x2="1" y2="0"><stop offset="0" stop-color="#d6d4d2"/><stop offset="0.45" stop-color="#e2dad2"/><stop offset="1" stop-color="#e4dcd4"/></linearGradient>
<g id="man">
<g clip-path="url(#avc)">
<rect x="-40" y="-40" width="80" height="80" fill="url(#manbg)"/>
<g filter="url(#soft)">
<rect x="-11" y="16" width="25" height="26" fill="#dcb49a"/>
<path d="M-34,40 L-22,27 Q-15,22 -11,21 L-4,40 Z" fill="#bcc4dc"/>
<path d="M14,21 Q20,23 25,28 L34,40 L8,40 Z" fill="#bcc4dc"/>
<ellipse cx="-16" cy="1.5" rx="3" ry="6" fill="#d6a68a"/>
<ellipse cx="19" cy="1.5" rx="3" ry="6" fill="#d2a086"/>
<path d="M-15,-10 Q-15,-22 1.5,-22 Q18,-22 18,-10 L17.5,6 Q16.5,22 1.5,24 Q-13.5,22 -14.5,6 Z" fill="#ecc8ae"/>
<path d="M-13,5 Q-12,22 1.5,24.5 Q16,22 16.5,5 Q14,12 11,10 Q6,6.5 1.5,7 Q-3,6.5 -8,10 Q-11,12 -13,5 Z" fill="#a2583a"/>
<path d="M-4.4,9.5 Q2,15 9,9.5 L9,12 Q2,15 -4.4,12 Z" fill="#f6f0ea"/>
<path d="M-16.6,-3 Q-19,-28 2,-30.5 Q19,-30 18.5,-6 L17,-4 Q16,-17 6,-17.5 Q-8,-18 -13.5,-9 Z" fill="#4a2a1c"/>
<path d="M-11,-6.5 Q-6,-8 -2,-6.5 M5,-6.5 Q9,-8 13,-6.5" stroke="#6a4432" stroke-width="1.4" fill="none"/>
<ellipse cx="-6.1" cy="-3.2" rx="2.2" ry="1.1" fill="#3a2820"/>
<ellipse cx="9" cy="-3.2" rx="2.2" ry="1.1" fill="#3a2820"/>
</g>
</g>
</g>
<g id="woman">
<g clip-path="url(#avc)">
<rect x="-40" y="-40" width="80" height="80" fill="#92b83c"/>
<g filter="url(#soft2)">
<path d="M-30,40 L-31,17 Q-29,3 -19,-10 Q-12,-24 0,-32 Q14,-34 22,-31 Q30,-22 35,-12 L40,40 Z" fill="#c8ae88"/>
<path d="M-31,17 Q-29,3 -19,-10 Q-16,-4 -20,6 Q-24,14 -31,17 Z" fill="#e0ccaa"/>
<path d="M20,-26 Q32,-8 30,12 Q28,30 16,40 L36,40 Q38,6 30,-16 Z" fill="#5e4632"/>
<path d="M-26,8 Q-32,18 -22,30 Q-14,24 -14,14 Z" fill="#8e7254"/>
<path d="M-14,26 Q-8,34 -4,40 L-20,40 Z" fill="#7a6048"/>
<g transform="rotate(-15 5 0)">
<ellipse cx="5" cy="-0.5" rx="16" ry="22.5" fill="#ecccae"/>
</g>
<path d="M-13,-12 Q-6,-30 10,-29 Q26,-26 24,-6 Q20,-21 8,-22 Q-4,-22 -13,-12 Z" fill="#d8bc92"/>
<path d="M-16,-6 Q-20,8 -16,22 Q-12,10 -13,-4 Z" fill="#a88a66"/>
<path d="M-4,-11.5 Q-1.5,-13.5 1.5,-11" stroke="#3a2a20" stroke-width="1.8" fill="none"/>
<path d="M13.5,-5 Q16,-6.5 19,-3.5" stroke="#3a2a20" stroke-width="1.8" fill="none"/>
<path d="M-5,7.5 Q3,14.5 11,10.5 Q4,11 -5,7.5 Z" fill="#fbf4ee" stroke="#c07870" stroke-width="1.6"/>
<path d="M5,0 Q8,3 6,4.5" stroke="#a87a5a" stroke-width="1.1" fill="none"/>
</g>
</g>
</g>
</defs>
<polyline points="858,302.3 834.6,302.3 834.6,558 853,558" fill="none" stroke="#e9b48c" stroke-width="2.5"/><polygon points="851.5,553 859,558 851.5,563" fill="#e9b48c"/><line x1="1848" y1="642.4" x2="1912" y2="642.4" stroke="#f2d3c0" stroke-width="2"/><polyline points="2017,728.3 2048.6,728.3" fill="none" stroke="#f2d3c0" stroke-width="2"/><line x1="2048.6" y1="660" x2="2048.6" y2="942" stroke="#f2d3c0" stroke-width="2"/><polygon points="2042.6,940 2054.6,940 2048.6,949" fill="#f2d3c0"/><polyline points="1091.6,813.4 1271.6,813.4 1271.6,857" fill="none" stroke="#f2d3c0" stroke-width="2"/><polygon points="1265.6,855 1277.6,855 1271.6,863" fill="#f2d3c0"/><polyline points="1580,1068.6 1727,1068.6 1727,1112" fill="none" stroke="#f2d3c0" stroke-width="2"/><polygon points="1721,1110 1733,1110 1727,1118.5" fill="#f2d3c0"/><polygon fill="#67707f" points="858.0,266.9 1172.0,266.9 1172.0,319.0 1147.0,335.8 1121.5,319.0 1121.5,316.5 908.5,316.5 908.5,319.0 883.0,335.8 858.0,319.0"/><polygon fill="#67707f" points="858.0,522.2 2095.3,522.2 2095.3,574.3 2070.3,591.1 2044.8,574.3 2044.8,571.8 908.5,571.8 908.5,574.3 883.0,591.1 858.0,574.3"/><polygon fill="#67707f" points="858.0,692.4 2017.2,692.4 2017.2,744.5 1992.2,761.3 1966.7,744.5 1966.7,742.0 908.5,742.0 908.5,744.5 883.0,761.3 858.0,744.5"/><rect x="882.4" y="352.30000000000007" width="261.6" height="66.4" rx="3" fill="#93c8fa"/><text transform="translate(890.8000000000001,400.3) scale(0.939,1)" font-size="37" fill="#000">Requirements</text><rect x="882.4" y="437.40000000000003" width="265.80000000000007" height="66.4" rx="3" fill="#93c8fa"/><text transform="translate(891.5,485.4) scale(0.961,1)" font-size="37" fill="#000">Arhitecture</text><polygon points="1119.6,450.0 1140.6,471.0 1119.6,492.0 1098.6,471.0" fill="#a9cc99" stroke="#4a74c8" stroke-width="2.2"/><rect x="1277.3" y="608.6" width="570.3" height="64.4" rx="2" fill="#b3bbea" stroke="#a9c3f3" stroke-width="2"/><rect x="1496.4" y="608.6" width="65.2" height="64.4" fill="#ffffff"/><line x1="1496.4" y1="608.6" x2="1561.6" y2="608.6" stroke="#5a6fa6" stroke-width="2.2" stroke-dasharray="5,4"/><line x1="1496.4" y1="673.0" x2="1561.6" y2="673.0" stroke="#5a6fa6" stroke-width="2.2" stroke-dasharray="5,4"/><rect x="1750" y="609.6" width="96.59999999999991" height="62.400000000000006" fill="#ffffff"/><text transform="translate(1285.9,655.6) scale(0.968,1)" font-size="37" fill="#000">Date-times</text><rect x="882.6" y="775.6" width="697.4" height="63.60000000000002" rx="3" fill="none" stroke="#9ccbf6" stroke-width="2" stroke-dasharray="5.5,4.5"/><rect x="883.3" y="861.3" width="556.5" height="62.10000000000002" rx="3" fill="none" stroke="#9ccbf6" stroke-width="2" stroke-dasharray="5.5,4.5"/><rect x="881.6" y="777.8000000000001" width="209.9999999999999" height="66.4" rx="3" fill="#93c8fa"/><text transform="translate(891.8000000000001,825.8) scale(0.873,1)" font-size="37" fill="#000">Bars</text><rect x="1267.8" y="863.9" width="723.4000000000001" height="64.4" rx="3" fill="#f4f4f4" stroke="#8ec3f8" stroke-width="2"/><rect x="1266.8" y="862.9" width="461.79999999999995" height="66.4" rx="3" fill="#93c8fa"/><rect x="1619.2" y="863.9" width="31.6" height="64.4" fill="#ffffff"/><line x1="1619.2" y1="863.9" x2="1650.8" y2="863.9" stroke="#5a6fa6" stroke-width="2.2" stroke-dasharray="5,4"/><line x1="1619.2" y1="928.3" x2="1650.8" y2="928.3" stroke="#5a6fa6" stroke-width="2.2" stroke-dasharray="5,4"/><text transform="translate(1276.8,910.9) scale(0.91,1)" font-size="37" fill="#000">Summary Bars</text><polygon points="1964,875.5 1985,896.5 1964,917.5 1943,896.5" fill="#a9cc99" stroke="#4a74c8" stroke-width="2.2"/><polygon points="1303.4,946.1999999999999 1336.4,979.1999999999999 1303.4,1012.1999999999999 1270.4,979.1999999999999" fill="none" stroke="#9ccbf6" stroke-width="2" stroke-dasharray="5.5,4.5"/><polygon points="2048.6,948.4 2082.6,982.4 2048.6,1016.4 2014.6,982.4" fill="#a9cc99" stroke="#4a74c8" stroke-width="2.6"/><rect x="1023.1" y="1033.1" width="556.9" height="66.4" fill="#de84b2"/><text transform="translate(1030.8,1081.1) scale(0.934,1)" font-size="37" fill="#000">Links</text><polygon points="1553,1044.8 1575,1066.8 1553,1088.8 1531,1066.8" fill="#f2ddd8"/><rect x="1722.5" y="1118.1999999999998" width="305.70000000000005" height="66.4" rx="4" fill="#f9f1b3"/><rect x="1722.5" y="1118.1999999999998" width="146.5" height="66.4" rx="3" fill="#f3e479"/><rect x="1866" y="1118.1999999999998" width="3" height="66.4" fill="#f3e479"/><text transform="translate(1732.0,1166.2) scale(0.961,1)" font-size="37" fill="#000">Diagram functions</text><rect x="887.3" y="1204.2999999999997" width="1148.7" height="64.4" rx="3" fill="#f4f4f4" stroke="#8ec3f8" stroke-width="2"/><rect x="886.3" y="1203.2999999999997" width="400.5" height="66.4" rx="3" fill="#93c8fa"/><text transform="translate(896.5,1251.3) scale(0.923,1)" font-size="37" fill="#000">Quality assurance</text><polygon points="2008,1215.8999999999999 2029,1236.8999999999999 2008,1257.8999999999999 1987,1236.8999999999999" fill="#a9cc99" stroke="#4a74c8" stroke-width="2.2"/><rect x="1723.5" y="1289.3999999999999" width="347.5" height="64.4" rx="3" fill="none" stroke="#8ec3f8" stroke-width="2"/><text transform="translate(1732.0,1336.4) scale(0.941,1)" font-size="37" fill="#000">Project delivery</text><use href="#man" transform="translate(2017.6,641.4)"/><use href="#woman" transform="translate(1946.4,641.4)"/><use href="#man" transform="translate(1190.6,812.7)"/><use href="#man" transform="translate(2092,897.6)"/></svg>
<svg style="left:2126.6px;top:280px" width="23.7" height="17.5"><polygon points="11.850000000000136,2.8600000000000003 21.10000000000027,14.9 2.6,14.9" fill="#8c8c8c" stroke="#8c8c8c" stroke-width="5.2" stroke-linejoin="round"/></svg>
<svg style="left:2127px;top:1329px" width="23.3" height="18.5"><polygon points="2.6,2.6 20.70000000000018,2.6 11.650000000000091,15.64" fill="#8c8c8c" stroke="#8c8c8c" stroke-width="5.2" stroke-linejoin="round"/></svg>
<div style="left:2127.2px;top:317px;width:22.200000000000273px;height:991px;background:#8c8c8c;border-radius:11px;"></div>
<svg style="left:23px;top:1374.8px" width="18.2" height="23.4"><polygon points="2.8600000000000003,11.700000000000045 15.600000000000003,2.6 15.600000000000003,20.80000000000009" fill="#8c8c8c" stroke="#8c8c8c" stroke-width="5.2" stroke-linejoin="round"/></svg>
<svg style="left:694.6px;top:1374.8px" width="18.2" height="23.4"><polygon points="2.6,2.6 15.339999999999932,11.700000000000045 2.6,20.80000000000009" fill="#8c8c8c" stroke="#8c8c8c" stroke-width="5.2" stroke-linejoin="round"/></svg>
<div style="left:61px;top:1375px;width:116px;height:22px;background:#8c8c8c;border-radius:11px;"></div>
<svg style="left:755.3px;top:1374.8px" width="17.7" height="23.4"><polygon points="2.8600000000000003,11.700000000000045 15.100000000000046,2.6 15.100000000000046,20.80000000000009" fill="#8c8c8c" stroke="#8c8c8c" stroke-width="5.2" stroke-linejoin="round"/></svg>
<svg style="left:2081px;top:1374.8px" width="18.3" height="23.4"><polygon points="2.6,2.6 15.440000000000182,11.700000000000045 2.6,20.80000000000009" fill="#8c8c8c" stroke="#8c8c8c" stroke-width="5.2" stroke-linejoin="round"/></svg>
<div style="left:812px;top:1375px;width:42px;height:22px;background:#8c8c8c;border-radius:11px;"></div>
</body></html>
